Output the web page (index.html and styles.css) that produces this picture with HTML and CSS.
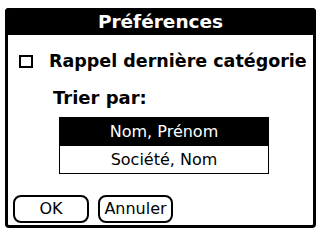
FILE: index.html
```html
<!DOCTYPE html>
<html lang="fr">
<head>
<meta charset="utf-8">
<title>Préférences</title>
<link rel="stylesheet" href="styles.css">
</head>
<body>
<div class="dialog">
  <div class="title">Préférences</div>
  <div class="content">
    <div class="check-row">
      <span class="checkbox"></span>
      <span class="check-label">Rappel dernière catégorie</span>
    </div>
    <div class="sort-label">Trier par:</div>
    <div class="list">
      <div class="item selected">Nom, Prénom</div>
      <div class="item">Société, Nom</div>
    </div>
    <div class="buttons">
      <button class="btn ok">OK</button>
      <button class="btn cancel">Annuler</button>
    </div>
  </div>
</div>
</body>
</html>
```
FILE: styles.css
```css
html, body {
  margin: 0;
  padding: 0;
  background: #fff;
}
body {
  font-family: "DejaVu Sans", "Liberation Sans", sans-serif;
  color: #000;
}
.dialog {
  margin: 8px 0 0 5px;
  width: 311px;
  height: 220px;
  box-sizing: border-box;
  border: 3px solid #000;
  border-top: 0;
  border-radius: 4px;
  display: flex;
  flex-direction: column;
}
.title {
  height: 27px;
  box-sizing: border-box;
  padding-top: 1px;
  background: #000;
  color: #fff;
  font-weight: bold;
  font-size: 18.5px;
  line-height: 26px;
  text-align: center;
  margin: 0 -3px;
  border-radius: 4px 4px 0 0;
}
.content {
  display: flex;
  flex-direction: column;
  padding: 20px 0 0 11px;
}
.check-row {
  display: flex;
  align-items: center;
  gap: 16px;
  height: 13px;
}
.checkbox {
  flex: 0 0 14px;
  width: 14px;
  height: 13px;
  box-sizing: border-box;
  border: 2px solid #000;
}
.check-label {
  font-weight: bold;
  font-size: 17.5px;
  line-height: 13px;
  white-space: nowrap;
}
.sort-label {
  margin: 21px 0 0 34px;
  font-weight: bold;
  font-size: 18px;
  line-height: 18px;
}
.list {
  margin: 10px 0 0 40px;
  width: 208px;
  border: 1px solid #000;
  display: flex;
  flex-direction: column;
}
.item {
  height: 27px;
  line-height: 27px;
  text-align: center;
  font-size: 16px;
}
.item.selected {
  background: #000;
  color: #fff;
  height: 28px;
  line-height: 28px;
}
.buttons {
  display: flex;
  gap: 9px;
  margin: 21px 0 0 -6px;
}
.btn {
  height: 28px;
  box-sizing: border-box;
  border: 2px solid #000;
  border-radius: 8px;
  background: #fff;
  color: #000;
  font-family: "DejaVu Sans", sans-serif;
  font-size: 16px;
  line-height: 24px;
  padding: 0;
}
.ok { width: 76px; }
.cancel { width: 75px; }
```
